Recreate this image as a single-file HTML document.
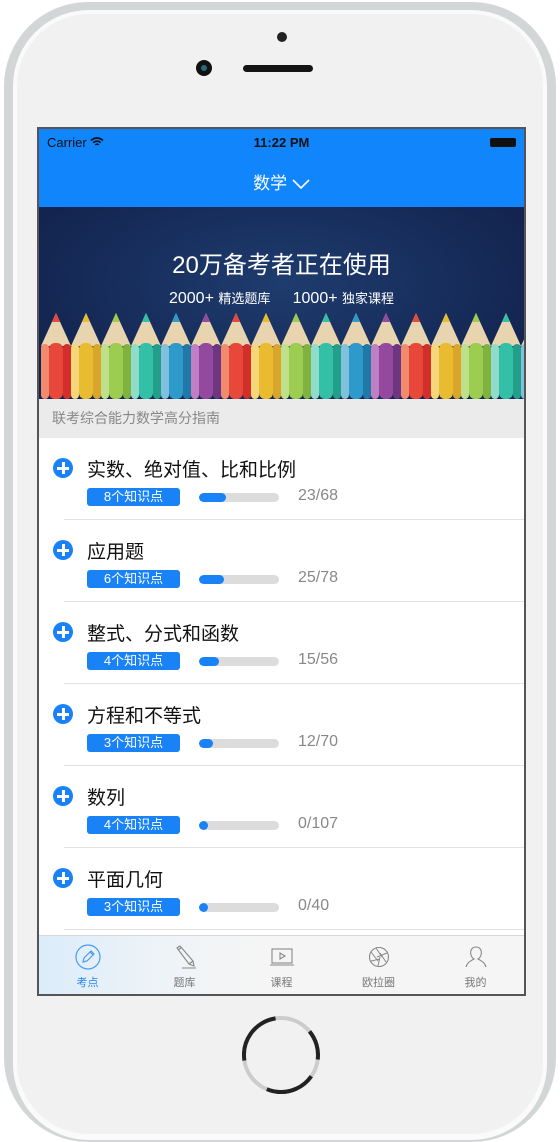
<!DOCTYPE html>
<html><head><meta charset="utf-8"><style>
*{margin:0;padding:0;box-sizing:border-box}
body{width:560px;height:1125px;background:#fff;position:relative;overflow:hidden;font-family:"Liberation Sans","Noto Sans CJK SC",sans-serif}
.outer{position:absolute;left:4px;top:2px;width:552px;height:1140px;border-radius:84px;background:#d3d6d7}
.inner{position:absolute;left:13px;top:10px;width:534px;height:1130px;border-radius:76px;background:#fafafa}
.face{position:absolute;left:17px;top:14px;width:526px;height:1120px;border-radius:72px;background:#f1f1f1}
.screen{position:absolute;left:37px;top:127px;width:489px;height:869px;border:2px solid #555;background:#fff;overflow:hidden}
.sb{position:absolute;left:0;top:0;width:485px;height:78px;background:#1185fc}
.row{position:absolute;left:0;width:485px;height:82px}
.plus{position:absolute;left:14px;top:20px;width:20px;height:20px;border-radius:50%;background:#1a82f7}
.plus:before{content:"";position:absolute;left:4px;top:8.5px;width:12px;height:3px;background:#fff}
.plus:after{content:"";position:absolute;left:8.5px;top:4px;width:3px;height:12px;background:#fff}
.t{position:absolute;left:48px;top:17px;font-size:19px;color:#111}
.bd{position:absolute;left:48px;top:50px;width:93px;height:18px;border-radius:3px;background:#1a82f7;color:#fff;font-size:13px;line-height:18px;text-align:center}
.pb{position:absolute;left:160px;top:55px;width:80px;height:9px;border-radius:5px;background:#dcdcdc;overflow:hidden}
.pb i{display:block;height:9px;border-radius:5px;background:#1a82f7}
.n{position:absolute;left:259px;top:49px;font-size:16px;color:#888}
.dv{position:absolute;left:25px;bottom:0;right:0;height:1px;background:#e2e2e2}
.tab{position:absolute;top:806px;left:0;width:485px;height:59px;background:linear-gradient(90deg,#dcecfa 0%,#eef3f8 25%,#f5f5f5 45%);border-top:1px solid #d8d8d8}
.ti{position:absolute;top:0;width:97px;text-align:center;font-size:11px;color:#777}
.ti svg{display:block;margin:8px auto 0}
.ti span{display:block;margin-top:4px}
</style></head><body>
<div class="outer"></div><div class="inner"></div><div class="face"></div>
<div style="position:absolute;left:277px;top:32px;width:10px;height:10px;border-radius:50%;background:#222"></div>
<div style="position:absolute;left:196px;top:60px;width:16px;height:16px;border-radius:50%;background:#111"><div style="position:absolute;left:5px;top:5px;width:6px;height:6px;border-radius:50%;background:#2a6a80"></div></div>
<div style="position:absolute;left:243px;top:65px;width:70px;height:7px;border-radius:4px;background:#151515"></div>
<div style="position:absolute;left:242px;top:1016px;width:78px;height:78px;border-radius:50%;border:4px solid #ccc"></div>
<svg style="position:absolute;left:242px;top:1016px" width="78" height="78" viewBox="0 0 78 78"><circle cx="39" cy="39" r="37" fill="none" stroke="#222" stroke-width="4" stroke-dasharray="30 38 0 0" transform="rotate(-145 39 39)"/><circle cx="39" cy="39" r="37" fill="none" stroke="#222" stroke-width="4" stroke-dasharray="40 200" transform="rotate(35 39 39)"/></svg>

<div class="screen">
<div class="sb">
<div style="position:absolute;left:8px;top:6px;font-size:13px;color:#111">Carrier <svg width="14" height="10" viewBox="0 0 14 10"><path d="M1 3.5 Q7 -1.5 13 3.5 M3.2 5.7 Q7 2.5 10.8 5.7 M5.3 7.8 Q7 6.5 8.7 7.8" stroke="#111" stroke-width="1.6" fill="none"/></svg></div>
<div style="position:absolute;left:0;width:485px;top:6px;text-align:center;font-size:13px;font-weight:bold;color:#111">11:22 PM</div>
<div style="position:absolute;right:8px;top:9px;width:26px;height:9px;border-radius:2px;background:#111"></div>
<div style="position:absolute;left:0;width:485px;top:40px;text-align:center;font-size:17px;color:#fff">数学 <svg width="18" height="10" viewBox="0 0 18 10"><path d="M1 1 L9 9 L17 1" stroke="#fff" stroke-width="1.6" fill="none"/></svg></div>
</div>
<div style="position:absolute;left:0;top:78px;width:485px;height:192px;background:radial-gradient(ellipse at 50% 40%,#1e3c6e,#132450 80%)">
<div style="position:absolute;left:0;width:485px;top:38px;text-align:center;color:#fff;font-size:24px">20万备考者正在使用</div>
<div style="position:absolute;left:0;width:485px;top:81px;text-align:center;color:#fff;font-size:16px">2000+ <span style="font-size:13px">精选题库</span>&nbsp;&nbsp;&nbsp;&nbsp; 1000+ <span style="font-size:13px">独家课程</span></div>
<svg style="position:absolute;left:0;top:0" width="485" height="192" viewBox="38 206 485 192">
<defs>
<g id="p0"><path d="M0 345 L15 312 L30 345Z" fill="#e8d5b0"/><path d="M11 321 L15 312 L19 321Z" fill="#e8483a"/><rect x="0" y="343" width="8" height="55" rx="4" fill="#f28b6e"/><rect x="8" y="342" width="14" height="56" rx="6" fill="#e8483a"/><rect x="22" y="343" width="8" height="55" rx="4" fill="#d32f2a"/></g>
<g id="p1"><path d="M0 345 L15 312 L30 345Z" fill="#e8d5b0"/><path d="M11 321 L15 312 L19 321Z" fill="#e9bb30"/><rect x="0" y="343" width="8" height="55" rx="4" fill="#f5d77a"/><rect x="8" y="342" width="14" height="56" rx="6" fill="#e9bb30"/><rect x="22" y="343" width="8" height="55" rx="4" fill="#d9a52a"/></g>
<g id="p2"><path d="M0 345 L15 312 L30 345Z" fill="#e8d5b0"/><path d="M11 321 L15 312 L19 321Z" fill="#9ccc50"/><rect x="0" y="343" width="8" height="55" rx="4" fill="#bfe08a"/><rect x="8" y="342" width="14" height="56" rx="6" fill="#9ccc50"/><rect x="22" y="343" width="8" height="55" rx="4" fill="#7fb23f"/></g>
<g id="p3"><path d="M0 345 L15 312 L30 345Z" fill="#e8d5b0"/><path d="M11 321 L15 312 L19 321Z" fill="#34c0a6"/><rect x="0" y="343" width="8" height="55" rx="4" fill="#8fdccb"/><rect x="8" y="342" width="14" height="56" rx="6" fill="#34c0a6"/><rect x="22" y="343" width="8" height="55" rx="4" fill="#239e8a"/></g>
<g id="p4"><path d="M0 345 L15 312 L30 345Z" fill="#e8d5b0"/><path d="M11 321 L15 312 L19 321Z" fill="#2e9acb"/><rect x="0" y="343" width="8" height="55" rx="4" fill="#7fc0dc"/><rect x="8" y="342" width="14" height="56" rx="6" fill="#2e9acb"/><rect x="22" y="343" width="8" height="55" rx="4" fill="#1f78a6"/></g>
<g id="p5"><path d="M0 345 L15 312 L30 345Z" fill="#e8d5b0"/><path d="M11 321 L15 312 L19 321Z" fill="#934a9e"/><rect x="0" y="343" width="8" height="55" rx="4" fill="#c07fc2"/><rect x="8" y="342" width="14" height="56" rx="6" fill="#934a9e"/><rect x="22" y="343" width="8" height="55" rx="4" fill="#6e3680"/></g>
</defs>
<use href="#p0" x="40"/><use href="#p1" x="70"/><use href="#p2" x="100"/><use href="#p3" x="130"/><use href="#p4" x="160"/><use href="#p5" x="190"/>
<use href="#p0" x="220"/><use href="#p1" x="250"/><use href="#p2" x="280"/><use href="#p3" x="310"/><use href="#p4" x="340"/><use href="#p5" x="370"/>
<use href="#p0" x="400"/><use href="#p1" x="430"/><use href="#p2" x="460"/><use href="#p3" x="490"/><use href="#p4" x="520"/>
</svg>
</div>
<div style="position:absolute;left:0;top:270px;width:485px;height:39px;background:#ebebeb;color:#888;font-size:14px;line-height:39px;padding-left:13px">联考综合能力数学高分指南</div>

<div class="row" style="top:309px"><div class="plus"></div><div class="t">实数、绝对值、比和比例</div><div class="bd">8个知识点</div><div class="pb"><i style="width:27px"></i></div><div class="n">23/68</div><div class="dv"></div></div>
<div class="row" style="top:391px"><div class="plus"></div><div class="t">应用题</div><div class="bd">6个知识点</div><div class="pb"><i style="width:25px"></i></div><div class="n">25/78</div><div class="dv"></div></div>
<div class="row" style="top:473px"><div class="plus"></div><div class="t">整式、分式和函数</div><div class="bd">4个知识点</div><div class="pb"><i style="width:20px"></i></div><div class="n">15/56</div><div class="dv"></div></div>
<div class="row" style="top:555px"><div class="plus"></div><div class="t">方程和不等式</div><div class="bd">3个知识点</div><div class="pb"><i style="width:14px"></i></div><div class="n">12/70</div><div class="dv"></div></div>
<div class="row" style="top:637px"><div class="plus"></div><div class="t">数列</div><div class="bd">4个知识点</div><div class="pb"><i style="width:9px"></i></div><div class="n">0/107</div><div class="dv"></div></div>
<div class="row" style="top:719px"><div class="plus"></div><div class="t">平面几何</div><div class="bd">3个知识点</div><div class="pb"><i style="width:9px"></i></div><div class="n">0/40</div><div class="dv"></div></div>

<div class="tab">
<div class="ti" style="left:0;color:#2a86f0"><svg width="26" height="26" viewBox="0 0 26 26"><circle cx="13" cy="13" r="12" fill="none" stroke="#4a9af5" stroke-width="1.2"/><path d="M8 18 L9 14 L16 7 L19 10 L12 17 Z M15 8 L18 11" fill="none" stroke="#4a9af5" stroke-width="1.2"/></svg><span>考点</span></div>
<div class="ti" style="left:97px"><svg width="26" height="26" viewBox="0 0 26 26"><path d="M5 4 L8 2 L21 17 L22 22 L17 20 Z M6 6 L9 4 M17 20 L21 17 M10 24 L24 24" fill="none" stroke="#888" stroke-width="1.1"/></svg><span>题库</span></div>
<div class="ti" style="left:194px"><svg width="26" height="26" viewBox="0 0 26 26"><rect x="3" y="5" width="20" height="14" fill="none" stroke="#888" stroke-width="1.1"/><path d="M1 21 L25 21 M11 9 L16 12 L11 15 Z" fill="none" stroke="#888" stroke-width="1.1"/></svg><span>课程</span></div>
<div class="ti" style="left:291px"><svg width="26" height="26" viewBox="0 0 26 26"><circle cx="13" cy="13" r="9.5" fill="none" stroke="#888" stroke-width="1.1"/><path d="M10 4 L16 13 M21 9 L11 13 M20 18 L14 9 M12 22 L14 13 M5 17 L14 15 M5 8 L12 17" fill="none" stroke="#888" stroke-width="1"/></svg><span>欧拉圈</span></div>
<div class="ti" style="left:388px"><svg width="26" height="26" viewBox="0 0 26 26"><path d="M13 3 C8 3 7 8 8 11 C9 14 11 15 11 15 C7 17 4 19 3 23 M13 3 C18 3 19 8 18 11 C17 14 15 15 15 15 C19 17 22 19 23 23" fill="none" stroke="#888" stroke-width="1.1"/></svg><span>我的</span></div>
</div>
</div>
</body></html>
